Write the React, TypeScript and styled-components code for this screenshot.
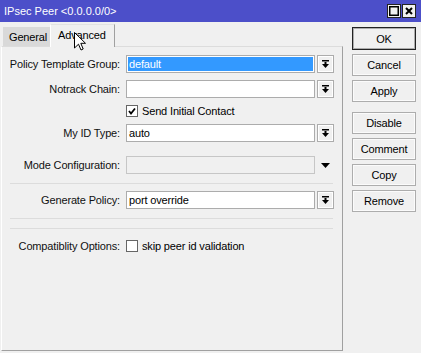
import React from "react";
import styled, { createGlobalStyle } from "styled-components";

const GlobalStyle = createGlobalStyle`
  html, body {
    margin: 0;
    padding: 0;
    background: #f0f0f0;
  }
  body {
    font-family: "Liberation Sans", Arial, sans-serif;
    font-size: 11px;
    color: #000;
  }
`;

const Window = styled.div`
  position: relative;
  width: 421px;
  height: 353px;
  overflow: hidden;
  display: flex;
  flex-direction: column;
  background: #f0f0f0;
`;

const TitleBar = styled.div`
  height: 22px;
  display: flex;
  align-items: center;
  padding: 0 5px 0 4px;
  background: #4c4fc9;
  color: #fff;
  font-size: 11px;
`;

const CaptionButtons = styled.div`
  margin-left: auto;
  display: flex;
  gap: 1px;
`;

const CaptionButton = styled.div`
  width: 14px;
  height: 14px;
  box-sizing: border-box;
  border: 1px solid #222;
  background: #f0f0f0;
  display: flex;
  align-items: center;
  justify-content: center;
`;

const Body = styled.div`
  flex: 1;
  display: flex;
  letter-spacing: -0.15px;
`;

const TabArea = styled.div`
  width: 342px;
  margin-left: 1px;
  display: flex;
  flex-direction: column;
`;

const TabStrip = styled.div`
  height: 24px;
  display: flex;
  align-items: flex-end;
  padding-left: 2px;
`;

const Tab = styled.div<{ $active?: boolean }>`
  position: relative;
  z-index: 1;
  box-sizing: border-box;
  height: ${(p) => (p.$active ? "23px" : "19px")};
  margin-bottom: ${(p) => (p.$active ? "-1px" : "0")};
  width: ${(p) => (p.$active ? "65px" : "47px")};
  padding: ${(p) => (p.$active ? "4px 0 0 7px" : "4px 0 0 6px")};
  background: ${(p) => (p.$active ? "#f0f0f0" : "#d9d9d9")};
  border-left: ${(p) => (p.$active ? "1px solid #fff" : "none")};
  border-right: ${(p) => (p.$active ? "1px solid #a0a0a0" : "none")};
  border-top: ${(p) => (p.$active ? "1px solid #e3e3e3" : "none")};
`;

const Panel = styled.div`
  height: 305px;
  box-sizing: border-box;
  border-top: 1px solid #dcdcdc;
  border-left: 1px solid #fff;
  border-right: 1px solid #a0a0a0;
  border-bottom: 1px solid #a0a0a0;
  padding-top: 8px;
  display: flex;
  flex-direction: column;
`;

const Row = styled.div<{ $mt?: number }>`
  height: 18px;
  margin-top: ${(p) => p.$mt ?? 0}px;
  display: flex;
  align-items: center;
`;

const Label = styled.div`
  width: 118px;
  margin-right: 6px;
  text-align: right;
  white-space: nowrap;
  color: #111;
`;

const TextBox = styled.div<{ $variant?: "normal" | "selected" | "disabled" }>`
  width: 189px;
  height: 18px;
  box-sizing: border-box;
  padding-left: 2px;
  display: flex;
  align-items: center;
  border: 1px solid ${(p) => (p.$variant === "disabled" ? "#c6c6c6" : "#acacac")};
  background: ${(p) =>
    p.$variant === "selected" ? "#3399ff" : p.$variant === "disabled" ? "#f0f0f0" : "#fff"};
  box-shadow: ${(p) => (p.$variant === "selected" ? "inset 0 0 0 1px #fff" : "none")};
  color: ${(p) => (p.$variant === "selected" ? "#fff" : "#000")};
`;

const DropButton = styled.div`
  width: 17px;
  height: 18px;
  margin-left: 2px;
  box-sizing: border-box;
  border: 1px solid #acacac;
  box-shadow: inset 0 0 0 1px #fff;
  background: #f0f0f0;
  display: flex;
  align-items: center;
  justify-content: center;
`;

const PlainArrow = styled.div`
  width: 17px;
  margin-left: 2px;
  display: flex;
  align-items: center;
  justify-content: center;
`;

const CheckLabel = styled.div<{ $indent?: boolean }>`
  display: flex;
  align-items: center;
  margin-left: ${(p) => (p.$indent ? "124px" : "0")};
  white-space: nowrap;
`;

const CheckBox = styled.div`
  width: 12px;
  height: 12px;
  box-sizing: border-box;
  border: 1px solid #666;
  background: #fff;
  margin-right: 4px;
  display: flex;
  align-items: center;
  justify-content: center;
`;

const Separator = styled.div<{ $mt?: number }>`
  margin-top: ${(p) => p.$mt ?? 0}px;
  margin-left: 8px;
  width: 323px;
  height: 1px;
  background: #dcdcdc;
`;

const ButtonColumn = styled.div`
  margin-left: 9px;
  padding-top: 5px;
  width: 64px;
  display: flex;
  flex-direction: column;
  gap: 4px;
`;

const Button = styled.div<{ $primary?: boolean; $mt?: number }>`
  height: ${(p) => (p.$primary ? "23px" : "22px")};
  margin-top: ${(p) => p.$mt ?? 0}px;
  box-sizing: border-box;
  border: 1px solid ${(p) => (p.$primary ? "#222" : "#adadad")};
  box-shadow: inset 0 0 0 1px ${(p) => (p.$primary ? "#adadad" : "#fbfbfb")};
  background: #f0f0f0;
  display: flex;
  align-items: center;
  justify-content: center;
`;

const Cursor = styled.svg`
  position: absolute;
  left: 74px;
  top: 32px;
  z-index: 5;
`;

const DropIcon = () => (
  <svg width="7" height="8" viewBox="0 0 7 8">
    <rect x="0" y="0" width="7" height="1.5" fill="#000" />
    <rect x="2.5" y="2" width="2" height="2" fill="#000" />
    <polygon points="0,4 7,4 3.5,8" fill="#000" />
  </svg>
);

const Tick = () => (
  <svg width="8" height="8" viewBox="0 0 8 8">
    <polyline points="1,4 3,6.5 7,1.5" fill="none" stroke="#000" strokeWidth="1.8" />
  </svg>
);

type Field = {
  label: string;
  value: string;
  variant?: "normal" | "selected" | "disabled";
  mt: number;
};

const App = () => {
  const fields: Field[] = [
    { label: "Policy Template Group:", value: "default", variant: "selected", mt: 0 },
    { label: "Notrack Chain:", value: "", mt: 7 },
  ];

  return (
    <>
      <GlobalStyle />
      <Window>
        <TitleBar>
          <span>IPsec Peer &lt;0.0.0.0/0&gt;</span>
          <CaptionButtons>
            <CaptionButton>
              <svg width="10" height="10" viewBox="0 0 10 10">
                <rect x="0.75" y="0.75" width="8.5" height="8.5" fill="none" stroke="#000" strokeWidth="1.5" />
              </svg>
            </CaptionButton>
            <CaptionButton>
              <svg width="8" height="8" viewBox="0 0 8 8">
                <path d="M1 1 L7 7 M7 1 L1 7" stroke="#000" strokeWidth="2" />
              </svg>
            </CaptionButton>
          </CaptionButtons>
        </TitleBar>

        <Body>
          <TabArea>
            <TabStrip>
              <Tab>General</Tab>
              <Tab $active>Advanced</Tab>
            </TabStrip>
            <Panel>
              {fields.map((f) => (
                <Row key={f.label} $mt={f.mt}>
                  <Label>{f.label}</Label>
                  <TextBox $variant={f.variant}>{f.value}</TextBox>
                  <DropButton>
                    <DropIcon />
                  </DropButton>
                </Row>
              ))}

              <Row $mt={4}>
                <CheckLabel $indent>
                  <CheckBox>
                    <Tick />
                  </CheckBox>
                  Send Initial Contact
                </CheckLabel>
              </Row>

              <Row $mt={4}>
                <Label>My ID Type:</Label>
                <TextBox>auto</TextBox>
                <DropButton>
                  <DropIcon />
                </DropButton>
              </Row>

              <Row $mt={14}>
                <Label>Mode Configuration:</Label>
                <TextBox $variant="disabled" />
                <PlainArrow>
                  <svg width="9" height="5" viewBox="0 0 9 5">
                    <polygon points="0,0 9,0 4.5,5" fill="#000" />
                  </svg>
                </PlainArrow>
              </Row>

              <Separator $mt={9} />

              <Row $mt={7}>
                <Label>Generate Policy:</Label>
                <TextBox>port override</TextBox>
                <DropButton>
                  <DropIcon />
                </DropButton>
              </Row>

              <Separator $mt={9} />
              <Separator $mt={9} />

              <Row $mt={8}>
                <Label>Compatiblity Options:</Label>
                <CheckLabel>
                  <CheckBox />
                  skip peer id validation
                </CheckLabel>
              </Row>
            </Panel>
          </TabArea>

          <ButtonColumn>
            <Button $primary>OK</Button>
            <Button>Cancel</Button>
            <Button>Apply</Button>
            <Button $mt={6}>Disable</Button>
            <Button>Comment</Button>
            <Button>Copy</Button>
            <Button>Remove</Button>
          </ButtonColumn>
        </Body>

        <Cursor width="12" height="19" viewBox="0 0 12 19">
          <polygon
            points="0.5,0.5 0.5,16 4.5,12.2 7,18 9.2,17 6.8,11.3 11.5,11.3"
            fill="#fff"
            stroke="#000"
            strokeWidth="1"
          />
        </Cursor>
      </Window>
    </>
  );
};

export default App;
